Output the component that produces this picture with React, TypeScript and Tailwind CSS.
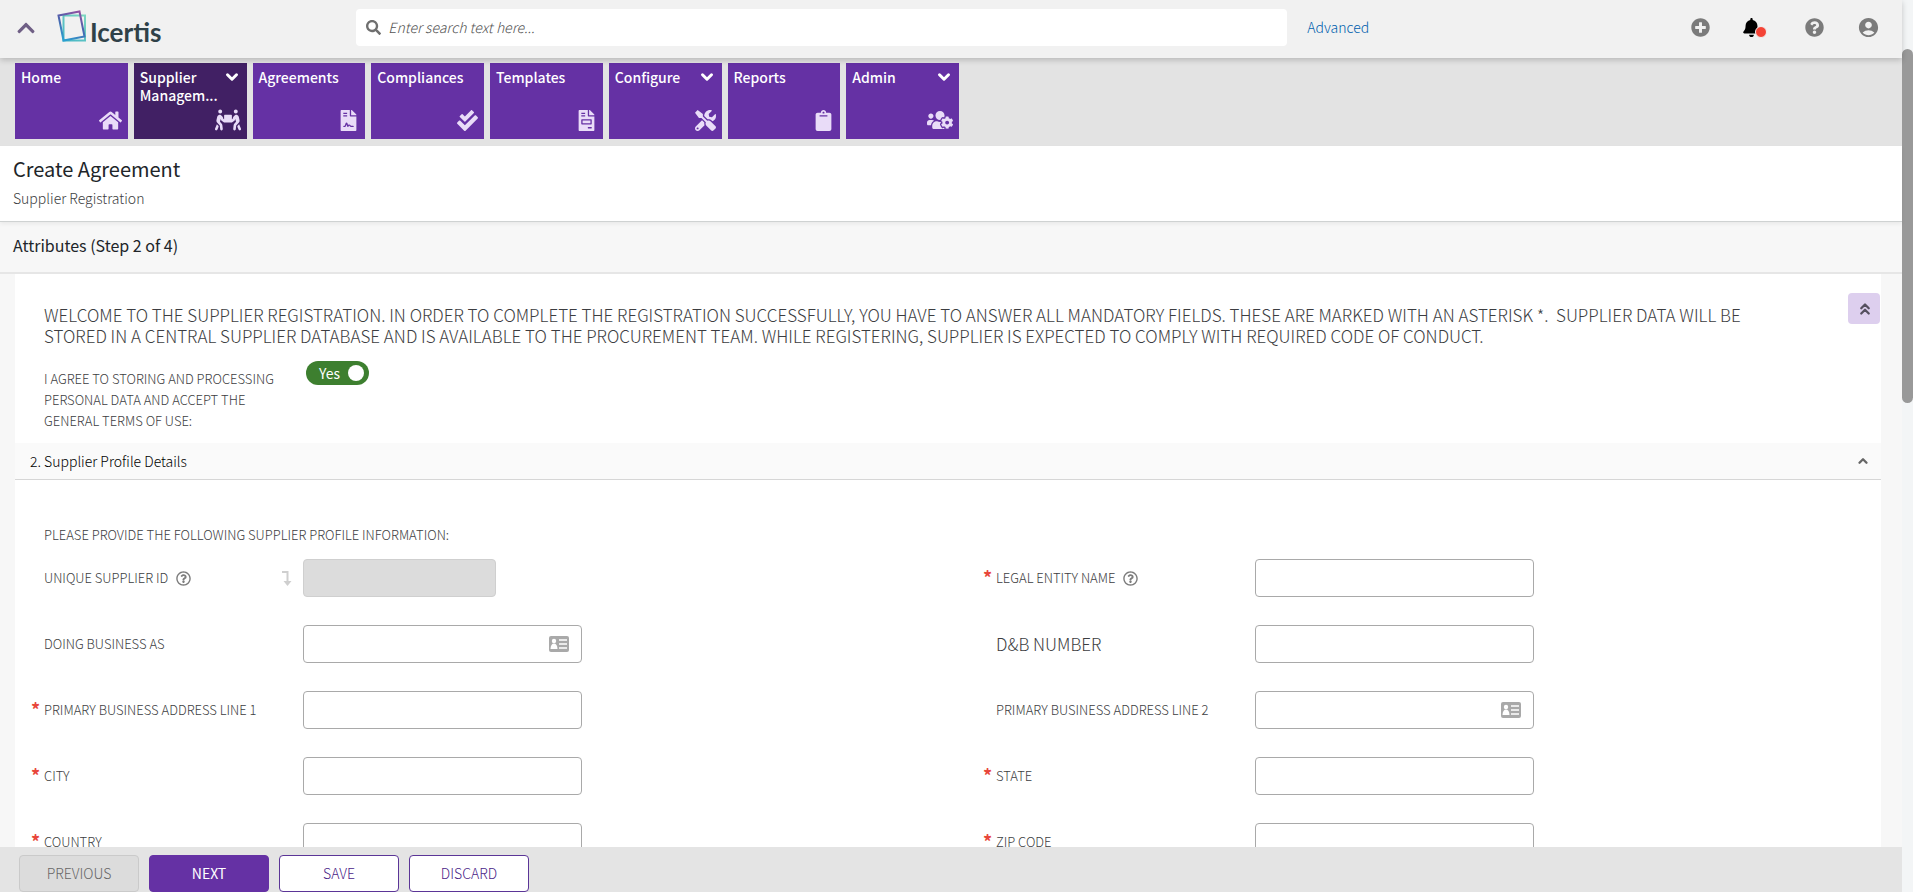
import type { ReactNode } from "react";
import { clsx } from "clsx";
import {
  FaBell,
  FaCheckDouble,
  FaChevronUp,
  FaClipboard,
  FaFileContract,
  FaFileInvoice,
  FaHome,
  FaPeopleCarry,
  FaPlusCircle,
  FaQuestionCircle,
  FaRegQuestionCircle,
  FaSearch,
  FaTools,
  FaUsersCog,
} from "react-icons/fa";
import { MdAccountCircle } from "react-icons/md";
import { ChevronDown, ChevronsUp, ChevronUp } from "lucide-react";

type Tile = {
  label: string;
  icon: ReactNode;
  menu?: boolean;
  active?: boolean;
};

type Field = {
  id: string;
  label: string;
  required?: boolean;
  help?: boolean;
  large?: boolean;
  card?: boolean;
  disabled?: boolean;
};

const tiles: Tile[] = [
  { label: "Home", icon: <FaHome size={23} /> },
  { label: "Supplier Managem...", icon: <FaPeopleCarry size={26} />, menu: true, active: true },
  { label: "Agreements", icon: <FaFileContract size={21} /> },
  { label: "Compliances", icon: <FaCheckDouble size={21} /> },
  { label: "Templates", icon: <FaFileInvoice size={21} /> },
  { label: "Configure", icon: <FaTools size={21} />, menu: true },
  { label: "Reports", icon: <FaClipboard size={21} /> },
  { label: "Admin", icon: <FaUsersCog size={26} />, menu: true },
];

const fields: Field[] = [
  { id: "supplier-id", label: "UNIQUE SUPPLIER ID", help: true, disabled: true },
  { id: "legal-name", label: "LEGAL ENTITY NAME", help: true, required: true },
  { id: "dba", label: "DOING BUSINESS AS", card: true },
  { id: "dnb", label: "D&B NUMBER", large: true },
  { id: "address-1", label: "PRIMARY BUSINESS ADDRESS LINE 1", required: true },
  { id: "address-2", label: "PRIMARY BUSINESS ADDRESS LINE 2", card: true },
  { id: "city", label: "CITY", required: true },
  { id: "state", label: "STATE", required: true },
  { id: "country", label: "COUNTRY", required: true },
  { id: "zip", label: "ZIP CODE", required: true },
];

function Logo() {
  return (
    <a href="#" className="ml-[21px] flex items-start text-[#2f4148]">
      <svg width="30" height="33" viewBox="0 0 30 33" fill="none">
        <defs>
          <linearGradient id="front" x1="22" y1="0" x2="8" y2="31" gradientUnits="userSpaceOnUse">
            <stop stopColor="#9a4fa0" />
            <stop offset="0.5" stopColor="#4a62ad" />
            <stop offset="1" stopColor="#2a9fd0" />
          </linearGradient>
          <linearGradient id="back" x1="28" y1="4" x2="6" y2="30" gradientUnits="userSpaceOnUse">
            <stop stopColor="#7fd8c0" />
            <stop offset="1" stopColor="#45b5c6" />
          </linearGradient>
        </defs>
        <path d="M6.500 6.500H28V31.500H6.500Z" stroke="url(#back)" strokeWidth="2" />
        <path d="M1.500 6.500L22.500 2.500L27.500 27.500L6.500 31.500Z" stroke="url(#front)" strokeWidth="2" />
      </svg>
      <span className="ml-[3px] mt-2 font-['Lato',sans-serif] text-[26px] leading-[30px] font-bold">
        Icertis
      </span>
    </a>
  );
}

function NavTile({ label, icon, menu, active }: Tile) {
  return (
    <a
      href="#"
      className={clsx(
        "flex h-[76px] flex-col justify-between pt-[5px] pr-1.5 pb-2 pl-1.5 text-white",
        active ? "bg-[#412064]" : "bg-[#6531a4]",
      )}
    >
      <span className="flex items-start justify-between">
        <span className="text-[14px] leading-[18px] font-medium">{label}</span>
        {menu && <ChevronDown size={18} strokeWidth={4} className="shrink-0" />}
      </span>
      <span className="flex h-[22px] items-center justify-end text-[#e9dcf8]">{icon}</span>
    </a>
  );
}

function CardIcon() {
  return (
    <svg
      width="20"
      height="16"
      viewBox="0 0 20 16"
      className="pointer-events-none absolute top-[11px] right-[13px]"
    >
      <rect width="20" height="16" rx="2" fill="#a9a9a9" />
      <circle cx="5" cy="5" r="2.200" fill="#fff" />
      <path d="M1.500 13C1.500 9.500 3 7.500 5 7.500S8.500 9.500 8.500 13Z" fill="#fff" />
      <path d="M10 4H18M10 8H18M10 12H18" stroke="#fff" strokeWidth="1.6" />
    </svg>
  );
}

function FormField({ id, label, required, help, large, card, disabled }: Field) {
  return (
    <div className="relative flex h-[38px] items-center">
      {required && (
        <span className="absolute top-2 -left-[13px] text-[18px] leading-5 font-bold text-[#e8463a]">
          *
        </span>
      )}
      <div className="flex w-[259px] shrink-0 items-center">
        <label htmlFor={id} className={large ? "text-[17px] font-light" : "text-[13px] font-light"}>
          {label}
        </label>
        {help && <FaRegQuestionCircle size={15} className="ml-2 text-[#7d7d7d]" />}
        {disabled && (
          <svg width="10" height="15" viewBox="0 0 10 15" fill="none" className="mr-[11px] ml-auto">
            <path d="M0 1H5.500V11" stroke="#cfcfcf" strokeWidth="2" />
            <path d="M1.500 10H9.500L5.500 15Z" fill="#cfcfcf" />
          </svg>
        )}
      </div>
      <div className="relative">
        <input
          id={id}
          type="text"
          disabled={disabled}
          className={clsx(
            "block h-[38px] rounded border px-2",
            disabled ? "w-[193px] border-[#cfcfcf] bg-[#dcdcdc]" : "w-[279px] border-[#a9a9a9] bg-white",
          )}
        />
        {card && <CardIcon />}
      </div>
    </div>
  );
}

function TopBar() {
  return (
    <header className="relative z-10 flex h-[58px] shrink-0 items-center bg-[#f1f1f1] pr-[22px] pb-[3px] shadow-[0_2px_6px_rgba(0,0,0,0.2)]">
      <button type="button" aria-label="Collapse menu" className="ml-4 text-[#6f5f85]">
        <FaChevronUp size={20} />
      </button>
      <Logo />
      <form className="ml-[195px] flex h-[37px] w-[931px] items-center rounded bg-white pl-2.5">
        <FaSearch size={15} className="text-[#6f6f6f]" />
        <input
          type="search"
          aria-label="Search"
          placeholder="Enter search text here..."
          className="ml-[7px] flex-1 text-[14px] font-light italic outline-none placeholder:text-[#555]"
        />
      </form>
      <a href="#" className="ml-5 pb-0.5 text-[14px] leading-5 font-light text-[#005fae]">
        Advanced
      </a>
      <div className="ml-auto flex items-center text-[#7b7b7b]">
        <button type="button" aria-label="Add">
          <FaPlusCircle size={19} />
        </button>
        <button type="button" aria-label="Notifications" className="relative ml-8 text-black">
          <FaBell size={19} />
          <span className="absolute top-2 left-[13px] size-3 rounded-full border border-[#f1f1f1] bg-[#f44336]" />
        </button>
        <button type="button" aria-label="Help" className="ml-11">
          <FaQuestionCircle size={19} />
        </button>
        <button type="button" aria-label="Account" className="ml-[33px]">
          <MdAccountCircle size={23} />
        </button>
      </div>
    </header>
  );
}

function Actions() {
  const base = "h-[37px] w-[120px] rounded border text-[14px]";
  return (
    <footer className="flex h-[45px] shrink-0 items-end gap-2.5 bg-[#e4e4e4] pl-[19px]">
      <button type="button" disabled className={clsx(base, "border-[#cacaca] bg-[#dcdcdc] font-light text-[#666]")}>
        PREVIOUS
      </button>
      <button type="button" className={clsx(base, "border-[#6531a4] bg-[#6531a4] text-white")}>
        NEXT
      </button>
      <button type="button" className={clsx(base, "border-[#5b3597] bg-white font-light text-[#4a2388]")}>
        SAVE
      </button>
      <button type="button" className={clsx(base, "border-[#5b3597] bg-white font-light text-[#4a2388]")}>
        DISCARD
      </button>
    </footer>
  );
}

export default function App() {
  return (
    <div className="flex h-screen overflow-hidden bg-[#f7f7f7] font-['Noto_Sans_CJK_SC',sans-serif] text-[#3c3d41]">
      <div className="flex min-w-0 flex-1 flex-col">
        <TopBar />
        <div className="shrink-0 bg-[#e3e3e3] pt-[5px] pb-[7px] pl-[15px]">
          <nav className="grid max-w-[944px] grid-cols-8 gap-1.5">
            {tiles.map((tile) => (
              <NavTile key={tile.label} {...tile} />
            ))}
          </nav>
        </div>

        <div className="relative shrink-0 border-b border-[#cfd2d2] bg-white px-[13px] pt-[9px] pb-[13px] shadow-[0_2px_4px_rgba(0,0,0,0.06)]">
          <h1 className="text-[20px] leading-7 text-[#212529]">Create Agreement</h1>
          <p className="mt-[5px] text-[14px] leading-5 font-light">Supplier Registration</p>
        </div>
        <h2 className="flex h-[52px] shrink-0 items-center border-b-2 border-[#e6e6e6] px-[13px] pb-1 text-[16px] text-[#212529]">
          Attributes (Step 2 of 4)
        </h2>

        <main className="mr-[21px] ml-[15px] min-h-0 flex-1 overflow-hidden bg-white">
          <section className="pt-[19px] pb-3 pl-[29px]">
            <div className="flex items-start pr-px">
              <p className="mt-[11px] mr-16 flex-1 text-[17px] leading-[21px] font-light">
                WELCOME TO THE SUPPLIER REGISTRATION. IN ORDER TO COMPLETE THE REGISTRATION
                SUCCESSFULLY, YOU HAVE TO ANSWER ALL MANDATORY FIELDS. THESE ARE MARKED WITH AN
                ASTERISK *.&nbsp; SUPPLIER DATA WILL BE STORED IN A CENTRAL SUPPLIER DATABASE AND
                IS AVAILABLE TO THE PROCUREMENT TEAM. WHILE REGISTERING, SUPPLIER IS EXPECTED TO
                COMPLY WITH REQUIRED CODE OF CONDUCT.
              </p>
              <button
                type="button"
                aria-label="Collapse all"
                className="flex h-[31px] w-8 items-center justify-center rounded bg-[#ddcfee] pl-0.5 text-[#55505f]"
              >
                <ChevronsUp size={18} strokeWidth={3} />
              </button>
            </div>
            <div className="mt-[15px] flex items-start">
              <label htmlFor="consent" className="w-[262px] pt-[7px] pr-6 text-[13px] leading-[21px] font-light">
                I AGREE TO STORING AND PROCESSING PERSONAL DATA AND ACCEPT THE GENERAL TERMS OF USE:
              </label>
              <div className="relative flex h-6 w-[63px] items-center justify-between rounded-full bg-[#3d7f2f] pr-[5px] pl-[13px] text-[14px] text-white">
                <input
                  id="consent"
                  type="checkbox"
                  defaultChecked
                  className="absolute inset-0 size-full cursor-pointer opacity-0"
                />
                Yes
                <span className="size-4 rounded-full bg-white" />
              </div>
            </div>
          </section>

          <section>
            <div className="flex h-[37px] items-center justify-between border-b border-[#d6d6d6] bg-[#fafafa] pr-[11px] pl-[15px]">
              <h3 className="text-[14px] font-light text-black">2. Supplier Profile Details</h3>
              <button type="button" aria-label="Collapse section" className="text-[#666]">
                <ChevronUp size={14} strokeWidth={4} />
              </button>
            </div>
            <div className="px-[29px] pt-[45px]">
              <p className="text-[13px] leading-5 font-light">
                PLEASE PROVIDE THE FOLLOWING SUPPLIER PROFILE INFORMATION:
              </p>
              <div className="mt-3.5 grid grid-cols-2 gap-x-24 gap-y-7">
                {fields.map((field) => (
                  <FormField key={field.id} {...field} />
                ))}
              </div>
            </div>
          </section>
        </main>

        <Actions />
      </div>

      <div className="w-[11px] shrink-0 bg-[#f3f5f6] pt-[49px]">
        <div className="h-[354px] rounded-full bg-[#999]" />
      </div>
    </div>
  );
}
